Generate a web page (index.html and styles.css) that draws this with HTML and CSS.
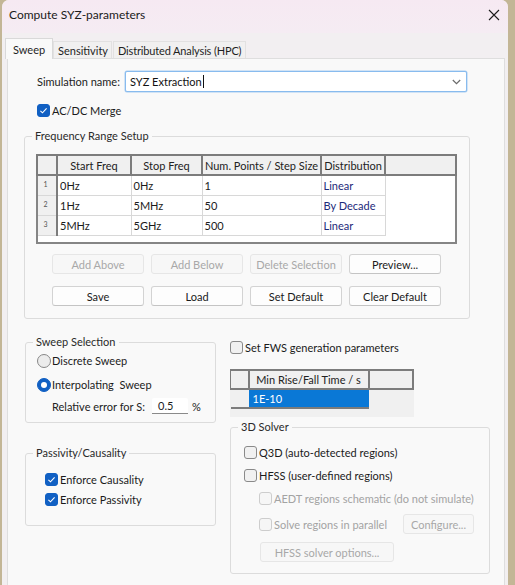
FILE: index.html
```html
<!DOCTYPE html>
<html lang="en">
<head>
<meta charset="utf-8">
<title>Compute SYZ-parameters</title>
<link rel="stylesheet" href="styles.css">
</head>
<body>
<div class="window">
  <div class="titlebar">
    <span class="title">Compute SYZ-parameters</span>
    <svg class="close" width="12" height="12" viewBox="0 0 12 12"><path d="M1 1 L11 11 M11 1 L1 11" stroke="#1c1c1c" stroke-width="1.1" fill="none"/></svg>
  </div>
  <div class="tabs">
    <div class="tab active">Sweep</div>
    <div class="tab t-sens">Sensitivity</div>
    <div class="tab t-dist">Distributed Analysis (HPC)</div>
  </div>
  <div class="panel">
    <div class="sim-row">
      <span class="sim-label">Simulation name:</span>
      <div class="combo">
        <span class="combo-text">SYZ Extraction</span><span class="caret"></span>
        <svg class="chev" width="9" height="6" viewBox="0 0 9 6"><path d="M0.8 1 L4.5 4.6 L8.2 1" stroke="#6a6a6a" stroke-width="1.2" fill="none"/></svg>
      </div>
    </div>
    <div class="check-row acdc">
      <span class="cb on"><svg width="13" height="13" viewBox="0 0 13 13"><path d="M3.4 6.8 L5.5 8.8 L9.6 4.4" stroke="#fff" stroke-width="1.1" fill="none"/></svg></span>
      <span class="lbl">AC/DC Merge</span>
    </div>

    <fieldset class="group freq">
      <legend>Frequency Range Setup</legend>
      <table class="grid">
        <colgroup><col class="c-rn"><col class="c-start"><col class="c-stop"><col class="c-num"><col class="c-dist"><col></colgroup>
        <thead>
          <tr><th></th><th>Start Freq</th><th>Stop Freq</th><th>Num. Points / Step Size</th><th>Distribution</th><th></th></tr>
        </thead>
        <tbody>
          <tr><td class="rn">1</td><td>0Hz</td><td>0Hz</td><td>1</td><td class="dist">Linear</td><td class="blank"></td></tr>
          <tr><td class="rn">2</td><td>1Hz</td><td>5MHz</td><td>50</td><td class="dist">By Decade</td><td class="blank"></td></tr>
          <tr><td class="rn">3</td><td>5MHz</td><td>5GHz</td><td>500</td><td class="dist">Linear</td><td class="blank"></td></tr>
          <tr class="filler"><td></td><td></td><td></td><td></td><td></td><td></td></tr>
        </tbody>
      </table>
      <div class="btn-row first">
        <button class="btn" disabled>Add Above</button>
        <button class="btn" disabled>Add Below</button>
        <button class="btn" disabled>Delete Selection</button>
        <button class="btn">Preview...</button>
      </div>
      <div class="btn-row second">
        <button class="btn">Save</button>
        <button class="btn">Load</button>
        <button class="btn">Set Default</button>
        <button class="btn">Clear Default</button>
      </div>
    </fieldset>

    <div class="lower">
      <div class="col-left">
        <fieldset class="group sweep">
          <legend>Sweep Selection</legend>
          <div class="radio-row r1"><span class="radio"></span><span class="lbl">Discrete Sweep</span></div>
          <div class="radio-row r2"><span class="radio on"></span><span class="lbl">Interpolating&nbsp; Sweep</span></div>
          <div class="err-row">
            <span class="err-label">Relative error for S:</span>
            <span class="err-input">0.5</span>
            <span class="pct">%</span>
          </div>
        </fieldset>
        <fieldset class="group passivity">
          <legend>Passivity/Causality</legend>
          <div class="check-row p1">
            <span class="cb on"><svg width="13" height="13" viewBox="0 0 13 13"><path d="M3.4 6.8 L5.5 8.8 L9.6 4.4" stroke="#fff" stroke-width="1.1" fill="none"/></svg></span>
            <span class="lbl">Enforce Causality</span>
          </div>
          <div class="check-row p2">
            <span class="cb on"><svg width="13" height="13" viewBox="0 0 13 13"><path d="M3.4 6.8 L5.5 8.8 L9.6 4.4" stroke="#fff" stroke-width="1.1" fill="none"/></svg></span>
            <span class="lbl">Enforce Passivity</span>
          </div>
        </fieldset>
      </div>

      <div class="col-right">
        <div class="check-row fws">
          <span class="cb"></span>
          <span class="lbl">Set FWS generation parameters</span>
        </div>
        <div class="fws-table">
          <table class="fgrid">
            <colgroup><col class="f-rn"><col class="f-col"><col></colgroup>
            <thead><tr><th></th><th>Min Rise/Fall Time / s</th><th></th></tr></thead>
            <tbody><tr><td class="rn"></td><td class="sel">1E-10</td><td class="blank"></td></tr></tbody>
          </table>
        </div>
        <fieldset class="group solver">
          <legend>3D Solver</legend>
          <div class="check-row s1"><span class="cb"></span><span class="lbl">Q3D (auto-detected regions)</span></div>
          <div class="check-row s2"><span class="cb"></span><span class="lbl">HFSS (user-defined regions)</span></div>
          <div class="check-row s3 disabled"><span class="cb"></span><span class="lbl">AEDT regions schematic (do not simulate)</span></div>
          <div class="check-row s4 disabled">
            <span class="cb"></span><span class="lbl">Solve regions in parallel</span>
            <button class="btn cfg" disabled>Configure...</button>
          </div>
          <button class="btn hfss-opt" disabled>HFSS solver options...</button>
        </fieldset>
      </div>
    </div>
  </div>
</div>
</body>
</html>
```

FILE: styles.css
```css
* { box-sizing: border-box; }

html, body {
  margin: 0;
  padding: 0;
}

body {
  width: 515px;
  height: 585px;
  overflow: hidden;
  background: #c3b696;
  font-family: Lato, "Noto Sans", "Liberation Sans", sans-serif;
  font-size: 11px;
  color: #1b1b1b;
}

.window {
  margin-left: 2px;
  width: 506px;
  height: 585px;
  background: #f2eff1;
  border-radius: 7px 7px 0 0;
  overflow: hidden;
}

.titlebar {
  height: 33px;
  background: linear-gradient(#f6e9f2, #f5ecf3);
  display: flex;
  align-items: center;
  padding-left: 7px;
  padding-right: 0;
}

.title {
  font-size: 12px;
  color: #1a1a1a;
  flex: 1;
  margin-top: -4px;
}

.close {
  margin-right: 8px;
  margin-top: -4px;
}

.tabs {
  height: 25px;
  display: flex;
  align-items: flex-end;
  padding-left: 3px;
  position: relative;
  z-index: 1;
}

.tab {
  height: 17px;
  background: #f1f0f0;
  border: 1px solid #e2e1e1;
  border-bottom: none;
  display: flex;
  align-items: center;
  padding: 0 4px 0 4px;
  color: #1f1f1f;
  white-space: nowrap;
}

.tab.active {
  height: 21px;
  width: 48px;
  background: #f9f9f9;
  border-color: #d9d9d9;
  padding-left: 7px;
  margin-bottom: -1px;
}

.t-sens { width: 59px; }
.t-dist { width: 133px; margin-left: 1px; letter-spacing: -0.15px; }

.panel {
  margin-left: 5px;
  width: 498px;
  height: 527px;
  background: #f9f9f9;
  border: 1px solid #dedede;
  border-bottom: none;
}

/* simulation name */
.sim-row {
  margin-top: 12px;
  padding-left: 29px;
  display: flex;
  align-items: center;
  height: 21px;
}

.sim-label {
  width: 88px;
  color: #222;
}

.combo {
  width: 342px;
  height: 21px;
  background: #fff;
  border: 1px solid #88bbee;
  box-shadow: 0 0 0 0.5px #a9cdf2;
  border-radius: 2px;
  display: flex;
  align-items: center;
  padding-left: 4px;
}

.combo-text { color: #111; }

.caret {
  width: 1px;
  height: 13px;
  background: #111;
  margin-left: 1px;
}

.chev { margin-left: auto; margin-right: 5px; }

/* checkbox rows */
.check-row {
  display: flex;
  align-items: center;
  height: 13px;
}

.cb {
  width: 13px;
  height: 13px;
  border: 1px solid #8a8a8a;
  background: #f1f1f1;
  border-radius: 3px;
  flex: none;
  display: flex;
}

.cb.on {
  background: #1160c3;
  border-color: #1160c3;
}

.cb.on svg { margin: -1px; }

.lbl { margin-left: 2px; white-space: nowrap; }

.acdc { margin-top: 11px; margin-left: 29px; height: 14px; }

.check-row.disabled .cb { border-color: #cdcdcd; background: #f6f6f6; }
.check-row.disabled .lbl { color: #a3a3a3; }

/* group boxes */
.group {
  margin: 0;
  padding: 0;
  border: 1px solid #dcdcdc;
  border-radius: 3px;
  min-width: 0;
}

.group legend {
  margin-left: 7px;
  padding: 0 3px;
  line-height: 14px;
  height: 14px;
  color: #2a2a2a;
}

.freq {
  margin-top: 12px;
  margin-left: 16px;
  width: 446px;
  height: 190px;
}

/* frequency grid */
.grid {
  margin-top: 11px;
  margin-left: 11px;
  width: 421px;
  height: 88px;
  border-collapse: collapse;
  table-layout: fixed;
  background: #fff;
  border: 2px solid #858585;
}

.c-rn { width: 20px; }
.c-start { width: 74px; }
.c-stop { width: 71px; }
.c-num { width: 119px; }
.c-dist { width: 64px; }

.grid th {
  height: 20px;
  background: #f0f0f0;
  border: 2px solid #7c7c7c;
  font-weight: normal;
  padding: 0;
  text-align: center;
  color: #222;
  white-space: nowrap;
  overflow: hidden;
}

.grid td {
  height: 20px;
  border: 1px solid #d8d8d8;
  padding: 0 1px 0 2px;
  color: #1a1a1a;
  white-space: nowrap;
}

.grid td.rn {
  background: #f0f0f0;
  border-right: 2px solid #7c7c7c;
  font-size: 7px;
  color: #555;
  text-align: center;
  vertical-align: top;
  padding: 4px 3px 0 0;
}

.grid td.dist { color: #1d2a7a; }

.grid td.blank { border: none; }

.grid tr.filler td {
  height: 8px;
  border: none;
  background: #fff;
}

/* buttons */
.btn {
  font-family: inherit;
  font-size: 11px;
  height: 20px;
  width: 92px;
  padding: 0;
  margin: 0;
  background: #fdfdfd;
  border: 1px solid #d3d3d3;
  border-bottom-color: #c4c4c4;
  border-radius: 3px;
  color: #1a1a1a;
  white-space: nowrap;
}

.btn:disabled {
  background: #f7f7f7;
  border-color: #e6e6e6;
  color: #a8a8a8;
}

.btn-row {
  display: flex;
  gap: 7px;
  margin-left: 27px;
}

.btn-row.first { margin-top: 10px; }
.btn-row.second { margin-top: 12px; }

/* lower area */
.lower {
  display: flex;
  gap: 14px;
  margin-top: 16px;
  margin-left: 17px;
}

.col-left { width: 191px; }
.col-right { width: 260px; }

.sweep { height: 88px; }

.radio-row {
  display: flex;
  align-items: center;
  height: 13px;
  margin-left: 11px;
}

.radio-row.r1 { margin-top: 5px; }
.radio-row.r2 { margin-top: 11px; }

.radio {
  width: 14px;
  height: 14px;
  border-radius: 50%;
  border: 1px solid #878787;
  background: #ececec;
  flex: none;
  display: flex;
  align-items: center;
  justify-content: center;
}

.radio.on {
  background: #1160c3;
  border-color: #1160c3;
}

.radio.on::after {
  content: "";
  width: 6px;
  height: 6px;
  border-radius: 50%;
  background: #fff;
}

.radio-row .lbl { margin-left: 1px; }

.err-row {
  display: flex;
  align-items: center;
  margin-top: 7px;
  margin-left: 26px;
  height: 16px;
}

.err-label { width: 100px; color: #222; }

.err-input {
  width: 36px;
  height: 16px;
  background: #fff;
  border-bottom: 1px solid #8a8a8a;
  border-radius: 2px 2px 0 0;
  padding-left: 6px;
  line-height: 15px;
}

.pct { margin-left: 4px; }

.passivity {
  margin-top: 23px;
  height: 80px;
}

.check-row.p1 { margin-top: 13px; margin-left: 19px; }
.check-row.p2 { margin-top: 7px; margin-left: 19px; }

/* right column */
.fws { margin-top: 6px; }

.fws-table {
  margin-top: 15px;
  width: 184px;
  height: 48px;
  background: #f0f0f0;
}

.fgrid {
  width: 184px;
  border-collapse: collapse;
  table-layout: fixed;
}

.f-rn { width: 18px; }
.f-col { width: 120px; }

.fgrid th {
  height: 19px;
  background: #f0f0f0;
  border: 2px solid #7c7c7c;
  border-left-width: 1px;
  font-weight: normal;
  padding: 0;
  text-align: center;
  color: #222;
  white-space: nowrap;
}

.fgrid td {
  height: 19px;
  padding: 0;
}

.fgrid td.rn {
  background: #f0f0f0;
  border-bottom: 2px solid #7c7c7c;
}

.fgrid td.sel {
  background: #0a78d6;
  color: #fff;
  padding-left: 4px;
  border-bottom: 2px solid #7c7c7c;
}

.fgrid td.blank { background: #f0f0f0; }

.solver {
  margin-top: 3px;
  width: 260px;
  height: 154px;
}

.check-row.s1 { margin-top: 12px; margin-left: 13px; }
.check-row.s2 { margin-top: 10px; margin-left: 13px; }
.check-row.s3 { margin-top: 10px; margin-left: 28px; }

.check-row.s4 {
  margin-top: 9px;
  margin-left: 28px;
  margin-right: 15px;
  height: 20px;
}

.cfg {
  width: 71px;
  margin-left: auto;
}

.hfss-opt {
  display: block;
  width: 134px;
  margin-top: 8px;
  margin-left: 29px;
}
```
